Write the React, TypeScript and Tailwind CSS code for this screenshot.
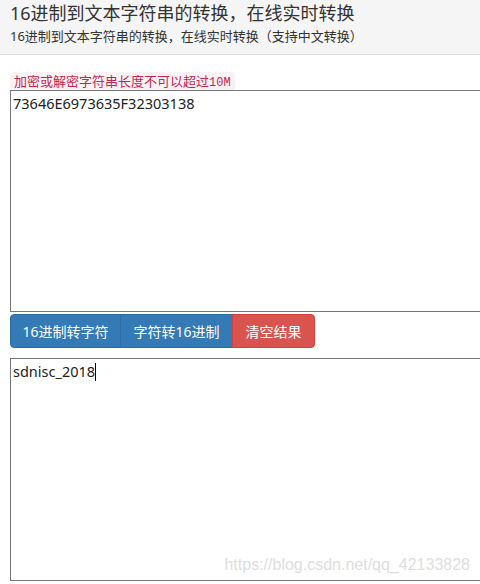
import React from "react";

const font = { fontFamily: '"Noto Sans", "Noto Sans CJK SC", sans-serif' };

export default function App() {
  return (
    <div className="w-[480px] h-[584px] overflow-hidden bg-white relative text-[#333]" style={font}>
      <div className="h-[55px] bg-[#f5f5f5] border-b border-[#dddddd] pl-[10px] pt-[1px]">
        <div className="text-[18px] leading-[24px] text-[#333]">16进制到文本字符串的转换，在线实时转换</div>
        <div className="text-[13px] leading-[20px] mt-[1px] text-[#333]">16进制到文本字符串的转换，在线实时转换（支持中文转换）</div>
      </div>
      <div className="pl-[10px]">
        <div className="mt-[17px] h-[18px] flex">
          <span className="bg-[#f9f2f4] text-[#c7254e] text-[13px] leading-[18px] px-[4px] rounded-[3px]">
            加密或解密字符串长度不可以超过<span className="font-['Liberation_Mono',monospace] text-[12px]">10M</span>
          </span>
        </div>
        <div className="w-[500px] h-[222px] border border-[#767676] px-[2px] pt-[2px] text-[14.5px] leading-[20px] text-[#222]">
          73646E6973635F32303138
        </div>
        <div className="mt-[2px] flex h-[34px] text-[14px] text-white">
          <div className="w-[111px] flex items-center justify-center bg-[#337ab7] border border-[#2e6da4] rounded-l-[4px]">16进制转字符</div>
          <div className="w-[113px] flex items-center justify-center bg-[#337ab7] border border-[#2e6da4] -ml-[1px]">字符转16进制</div>
          <div className="w-[83px] flex items-center justify-center bg-[#d9534f] border border-[#d43f3a] rounded-r-[4px] -ml-[1px]">清空结果</div>
        </div>
        <div className="mt-[10px] w-[500px] h-[223px] border border-[#767676] px-[2px] pt-[2px] text-[14.5px] leading-[20px] text-[#222]">
          sdnisc_2018<span className="inline-block w-[1px] h-[18px] bg-black align-middle -mt-[2px]"></span>
        </div>
      </div>
      <div className="absolute right-[10px] top-[553px] text-[16px] text-[#dedede] font-['Liberation_Sans',sans-serif]">
        https://blog.csdn.net/qq_42133828
      </div>
    </div>
  );
}
